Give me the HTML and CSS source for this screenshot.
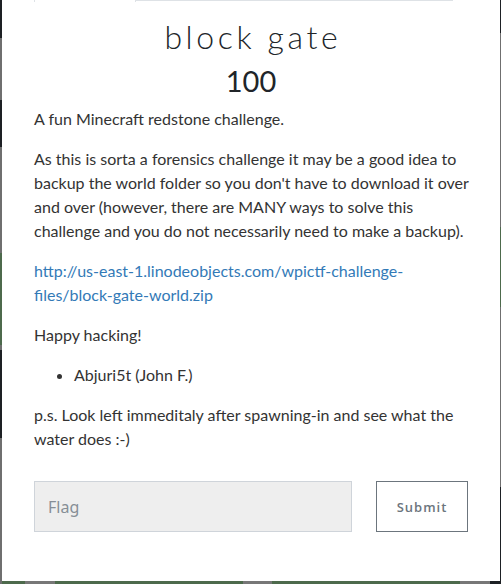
FILE: index.html
```html
<!DOCTYPE html>
<html lang="en">
<head>
<meta charset="utf-8">
<title>block gate</title>
<link rel="stylesheet" href="styles.css">
</head>
<body>
<div class="modal">
  <div class="modal-body">
    <div class="nav-tabs">
      <div class="tab active"></div>
      <div class="tab-rest"></div>
    </div>
    <div class="tab-content">
      <h2 class="challenge-name">block gate</h2>
      <h3 class="challenge-value">100</h3>
      <div class="challenge-desc">
        <p>A fun Minecraft redstone challenge.</p>
        <p>As this is sorta a forensics challenge it may be a good idea to backup the world folder so you don't have to download it over and over (however, there are MANY ways to solve this challenge and you do not necessarily need to make a backup).</p>
        <p><a class="link" href="#">http://us-east-1.linodeobjects.com/wpictf-challenge-files/block-gate-world.zip</a></p>
        <p>Happy hacking!</p>
        <ul>
          <li>Abjuri5t (John F.)</li>
        </ul>
        <p>p.s. Look left immeditaly after spawning-in and see what the water does :-)</p>
      </div>
      <div class="submit-row">
        <input class="flag-input" type="text" placeholder="Flag">
        <button class="submit-btn" type="button">Submit</button>
      </div>
    </div>
  </div>
</div>
</body>
</html>
```
FILE: styles.css
```css
html, body {
  margin: 0;
  padding: 0;
}
body {
  width: 501px;
  height: 584px;
  overflow: hidden;
  background-color: #4d6a4c;
  background-image:
    linear-gradient(to bottom, #1d2024 0, #1d2024 38px, #6f6f6f 38px, #6f6f6f 100px, #1d2024 100px, #1d2024 147px, #6f6f6f 147px, #6f6f6f 253px, #4d6a4c 253px, #4d6a4c 345px, #6f6f6f 345px, #6f6f6f 350px, #1d2024 350px, #1d2024 438px, #6f6f6f 438px),
    linear-gradient(to bottom, #1d2024 0, #1d2024 33px, #6f6f6f 33px, #6f6f6f 227px, #4d6a4c 227px, #4d6a4c 307px, #6f6f6f 307px, #6f6f6f 487px, #1d2024 487px),
    linear-gradient(to right, #4d6a4c 0, #4d6a4c 25px, #777 25px, #777 55px, #4d6a4c 55px, #4d6a4c 243px, #777 243px, #777 272px, #4d6a4c 272px, #4d6a4c 460px, #777 460px, #777 490px, #1d2024 490px);
  background-size: 2px 100%, 1px 100%, 100% 3px;
  background-position: left top, right top, left bottom;
  background-repeat: no-repeat;
  font-family: "Lato", "Liberation Sans", sans-serif;
}
.modal {
  margin: 0 1px 0 2px;
  background: #fff;
  height: 581px;
}
.modal-body {
  padding: 0 32px;
  color: #333;
}
.nav-tabs {
  display: flex;
  height: 2px;
}
.tab.active {
  width: 102px;
  height: 2px;
  border-left: 1px solid #dee2e6;
  border-right: 1px solid #dee2e6;
  box-sizing: border-box;
}
.tab-rest {
  width: 317px;
  height: 2px;
  border-bottom: 1px solid #dee2e6;
  box-sizing: border-box;
  margin-top: -1px;
}
.tab-content {
  padding-top: 16px;
}
.challenge-name {
  margin: 0 0 8px;
  padding-left: 3.6px;
  text-align: center;
  font-family: "Lato", sans-serif;
  font-weight: 300;
  font-size: 32px;
  letter-spacing: 3.6px;
  line-height: 1.2;
  color: #212529;
}
.challenge-value {
  margin: 0 0 8px;
  text-align: center;
  font-weight: 400;
  font-size: 29px;
  line-height: 1.2;
  color: #212529;
}
.challenge-desc {
  font-size: 16px;
  line-height: 24px;
  margin-right: -13.5px;
}
.challenge-desc p {
  margin: 0 0 16px;
}
.challenge-desc ul {
  margin: 0 0 16px;
  padding-left: 40px;
}
.link {
  color: #337ab7;
  text-decoration: none;
}
.submit-row {
  display: flex;
  justify-content: space-between;
  align-items: flex-start;
  margin-top: 30px;
}
.flag-input {
  box-sizing: border-box;
  width: 318px;
  height: 51px;
  margin: 0;
  padding: 0 13px;
  background: #eeeeee;
  border: 1px solid #cfd4da;
  border-radius: 0;
  font-family: "Noto Sans", "Open Sans", sans-serif;
  font-size: 16px;
  color: #495057;
  outline: none;
}
.flag-input::placeholder {
  color: #868e96;
}
.submit-btn {
  box-sizing: border-box;
  width: 92px;
  height: 51px;
  margin: 0;
  padding: 0;
  background: #fff;
  border: 1px solid #6c757d;
  border-radius: 0;
  font-family: "Open Sans", "Noto Sans", sans-serif;
  font-weight: 600;
  font-size: 13px;
  letter-spacing: 1px;
  color: #6c757d;
}
```
